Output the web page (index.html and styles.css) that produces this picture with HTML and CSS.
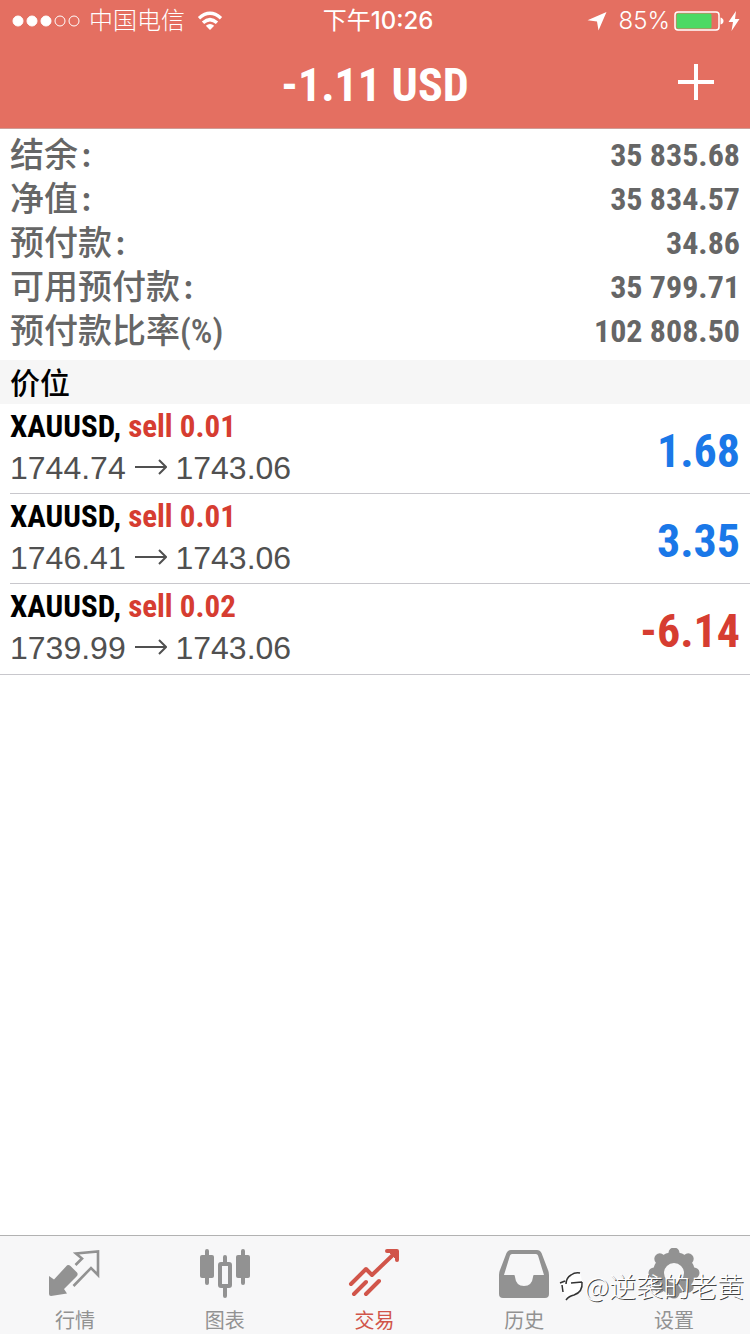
FILE: index.html
```html
<!DOCTYPE html>
<html lang="zh-CN">
<head>
<meta charset="utf-8">
<meta name="viewport" content="width=device-width, initial-scale=1">
<title>交易</title>
<link rel="stylesheet" href="styles.css">
</head>
<body>
<div class="app">
  <header class="header">
    <div class="status">
      <div class="status-side">
        <svg class="signal" width="68" height="12" viewBox="0 0 68 12" fill="#fff" stroke="#fff" aria-hidden="true">
          <circle cx="6" cy="6" r="5"/><circle cx="20" cy="6" r="5"/><circle cx="34" cy="6" r="5"/>
          <circle cx="48" cy="6" r="5" fill="none"/><circle cx="62" cy="6" r="5" fill="none"/>
        </svg>
        <span class="carrier">中国电信</span>
        <svg width="26" height="20" viewBox="0 0 26 20" fill="none" stroke="#fff" stroke-width="3.400" aria-hidden="true">
          <path d="M2 7.200Q13 -2.600 24 7.200"/><path d="M6 11.800Q13 5.400 20 11.800"/><path d="M13 19L8.800 14.800Q13 11.200 17.200 14.800Z" fill="#fff" stroke="none"/>
        </svg>
      </div>
      <time class="clock">下午<span class="clock-digits">10:26</span></time>
      <div class="status-side status-right">
        <svg class="locate" width="20" height="20" viewBox="0 0 20 20" fill="#fff" aria-hidden="true"><path d="M19.500 1L0.500 9.200L10 10.500L11.500 19.500Z"/></svg>
        <span class="percent">85%</span>
        <svg width="50" height="20" viewBox="0 0 50 20" aria-hidden="true">
          <rect x="1" y="1" width="44" height="18" rx="3" fill="none" stroke="#fff" stroke-width="1.500"/>
          <rect x="2.500" y="2.500" width="35" height="15" rx="1.500" fill="#4cd964"/>
          <path d="M46.500 6.500Q49.500 7.500 49.500 10T46.500 13.500Z" fill="#fff"/>
        </svg>
        <svg width="12" height="20" viewBox="0 0 12 20" fill="#fff" aria-hidden="true"><path d="M8 0L0.500 11H5L3.500 20L11.500 8H7Z"/></svg>
      </div>
    </div>
    <div class="nav">
      <h1 class="title">-1.11 USD</h1>
      <button class="add" type="button" aria-label="新订单">
        <svg width="36" height="36" viewBox="0 0 36 36" stroke="#fff" stroke-width="4" aria-hidden="true"><path d="M18 0V36M0 18H36"/></svg>
      </button>
    </div>
  </header>

  <main class="main">
    <dl class="account">
      <div class="account-row"><dt>结余<span class="colon">:</span></dt><dd>35 835.68</dd></div>
      <div class="account-row"><dt>净值<span class="colon">:</span></dt><dd>35 834.57</dd></div>
      <div class="account-row"><dt>预付款<span class="colon">:</span></dt><dd>34.86</dd></div>
      <div class="account-row"><dt>可用预付款<span class="colon">:</span></dt><dd>35 799.71</dd></div>
      <div class="account-row"><dt>预付款比率(%)</dt><dd>102 808.50</dd></div>
    </dl>
    <h2 class="section">价位</h2>
    <ul class="positions">
      <li class="position">
        <div class="details">
          <div class="symbol">XAUUSD, <span class="sell">sell 0.01</span></div>
          <div class="prices">1744.74 <svg class="arrow" viewBox="0 0 32 16" aria-label="→"><path d="M0 8H31M24 1L31 8L24 15"/></svg> 1743.06</div>
        </div>
        <div class="profit">1.68</div>
      </li>
      <li class="position">
        <div class="details">
          <div class="symbol">XAUUSD, <span class="sell">sell 0.01</span></div>
          <div class="prices">1746.41 <svg class="arrow" viewBox="0 0 32 16" aria-label="→"><path d="M0 8H31M24 1L31 8L24 15"/></svg> 1743.06</div>
        </div>
        <div class="profit">3.35</div>
      </li>
      <li class="position">
        <div class="details">
          <div class="symbol">XAUUSD, <span class="sell">sell 0.02</span></div>
          <div class="prices">1739.99 <svg class="arrow" viewBox="0 0 32 16" aria-label="→"><path d="M0 8H31M24 1L31 8L24 15"/></svg> 1743.06</div>
        </div>
        <div class="profit loss">-6.14</div>
      </li>
    </ul>
  </main>

  <nav class="tabs">
    <a class="tab" href="#quotes">
      <svg class="tab-icon" viewBox="0 0 52 52" fill="currentColor" aria-hidden="true">
        <path d="M0 28L5 31.500L17 18.500Q19 16 21.500 18L28 24.500Q29.500 26.500 27.500 28.500L15 41L18 45.500L2 48Q0 48 0 46Z"/>
        <path d="M26.500 17L33 10.500L27 5.500L49 3.500V27L42 20L24.500 38" fill="none" stroke="currentColor" stroke-width="2.600"/>
      </svg>
      <span>行情</span>
    </a>
    <a class="tab" href="#chart">
      <svg class="tab-icon" viewBox="0 0 52 52" fill="currentColor" aria-hidden="true">
        <rect x="1" y="7" width="14" height="23" rx="2"/><rect x="37" y="7" width="14" height="23" rx="2"/>
        <path d="M8 3V35M44 3V35M26 9V16M26 38V48" stroke="currentColor" stroke-width="4" stroke-linecap="round"/>
        <rect x="21" y="16" width="10" height="22" rx="1" fill="none" stroke="currentColor" stroke-width="4"/>
      </svg>
      <span>图表</span>
    </a>
    <a class="tab tab-active" href="#trade" aria-current="page">
      <svg class="tab-icon" viewBox="0 0 52 52" fill="none" stroke="currentColor" stroke-width="4" stroke-linecap="round" stroke-linejoin="round" aria-hidden="true">
        <path d="M3 36L18 21L24 27L48 4M39 3H49V12M6 46L18 34M18 46L31 33"/><path d="M40 3L49 12V3Z" fill="currentColor" stroke-width="1"/>
      </svg>
      <span>交易</span>
    </a>
    <a class="tab" href="#history">
      <svg class="tab-icon" viewBox="0 0 52 52" fill="currentColor" aria-hidden="true">
        <path fill-rule="evenodd" d="M13 2H39Q42 2 43.500 5L50 22Q51 24 51 27V46Q51 50 47 50H5Q1 50 1 46V27Q1 24 2 22L8.500 5Q10 2 13 2ZM14 6Q12.500 6 12 7.500L6 27H16Q17 27 17 29Q18 38 26 38T35 29Q35 27 36 27H46L40 7.500Q39.500 6 38 6Z"/>
      </svg>
      <span>历史</span>
    </a>
    <a class="tab" href="#settings">
      <svg class="tab-icon" viewBox="0 0 52 52" fill="currentColor" aria-hidden="true">
        <path fill-rule="evenodd" d="M26 4A21 21 0 1 0 26 46A21 21 0 1 0 26 4ZM26 15A10 10 0 1 1 26 35A10 10 0 1 1 26 15Z"/>
        <g stroke="currentColor" stroke-width="11" stroke-linecap="round"><path d="M26 5V7M26 43V45M6 25H8M44 25H46M11.800 10.800L13 12M39 38L40.200 39.200M11.800 39.200L13 38M39 12L40.200 10.800"/></g>
      </svg>
      <span>设置</span>
    </a>
    <div class="watermark">
      <svg width="25" height="32" viewBox="0 0 25 32" fill="none" aria-hidden="true">
        <path d="M21 3Q9 0 6 10L1 13L4 23Q8 25 8 30Q12 25 17 24Q25 20 23 11Z" fill="#fff"/>
        <path d="M21 3Q16 2 12 5Q7 8 7 14M1 13L6 11M12 13L23 12M3 15L4 22M23 12Q24 22 15 25Q10 26 7 30" stroke="#333" stroke-width="1.500"/>
      </svg>
      <span>@逆袭的老黄</span>
    </div>
  </nav>
</div>
</body>
</html>
```
FILE: styles.css
```css
* { box-sizing: border-box; }

body {
  margin: 0;
  background: #fff;
  font-family: "Liberation Sans", "Noto Sans CJK SC", sans-serif;
}

.app {
  display: flex;
  flex-direction: column;
  min-height: 100vh;
}

.header {
  background: #e46f61;
  color: #fff;
  border-bottom: 1px solid #cf9c96;
}

.status {
  display: grid;
  grid-template-columns: 1fr auto 1fr;
  align-items: center;
  height: 42px;
  padding: 0 10px 0 12px;
  font-family: Inter, "Noto Sans CJK SC", sans-serif;
  font-size: 24px;
  line-height: 40px;
}

.status-side {
  display: flex;
  align-items: center;
}

.status-right { justify-content: flex-end; gap: 4px; }
.carrier { margin: 0 12px 0 9px; font-weight: 300; }
.clock { padding-left: 4px; }
.clock-digits { font-weight: 500; }
.locate { margin-right: 8px; }
.percent { font-weight: 300; }

.nav {
  display: grid;
  grid-template-columns: 1fr auto 1fr;
  align-items: center;
  height: 86px;
  padding: 0 36px;
}

.title {
  grid-column: 2;
  margin: 0;
  font: bold 46px/60px "Roboto Condensed", Roboto, sans-serif;
}

.add {
  justify-self: end;
  display: flex;
  padding: 0;
  margin-bottom: 6px;
  border: 0;
  background: none;
}

.main { flex: 1; }

.account {
  margin: 0;
  padding: 4px 10px 7px;
  color: #666;
}

.account-row {
  display: flex;
  justify-content: space-between;
  height: 44px;
  line-height: 44px;
}

.account dt {
  font-family: "Roboto Condensed", "Noto Sans CJK SC", sans-serif;
  font-size: 34px;
  font-weight: 500;
}

.account dd {
  margin: 0;
  font: bold 32px/44px "Roboto Condensed", Roboto, sans-serif;
}

.colon {
  margin-left: 3px;
  font-family: Inter, sans-serif;
  font-weight: 600;
}

.section {
  margin: 0;
  padding: 0 10px 2px;
  background: #f6f6f6;
  font: 500 30px/42px "Noto Sans CJK SC", sans-serif;
}

.positions {
  margin: 0;
  padding: 0;
  list-style: none;
  border-bottom: 1px solid #c8c7cc;
}

.position {
  display: flex;
  justify-content: space-between;
  align-items: center;
  height: 90px;
  margin-left: 10px;
  padding-right: 10px;
  border-bottom: 1px solid #c8c7cc;
}

.position:last-child { border-bottom: 0; }

.details { padding-bottom: 2px; }

.symbol {
  font: bold 31px/40px "Roboto Condensed", Roboto, sans-serif;
}

.prices {
  color: #505050;
  font-size: 32px;
  line-height: 42px;
}

.arrow {
  width: 32px;
  height: 16px;
  vertical-align: 4px;
  fill: none;
  stroke: #505050;
  stroke-width: 2;
}

.profit {
  padding-top: 4px;
  color: #1a78e8;
  font: bold 46px/60px "Roboto Condensed", Roboto, sans-serif;
}

.sell, .profit.loss { color: #d63d31; }

.tabs {
  position: relative;
  display: grid;
  grid-template-columns: repeat(5, 1fr);
  height: 99px;
  padding-right: 1px;
  border-top: 1px solid #b2b2b2;
  background: #f7f7f8;
}

.tab {
  display: flex;
  flex-direction: column;
  align-items: center;
  padding-top: 12px;
  color: #929292;
  font: 20px/30px "Noto Sans CJK SC", sans-serif;
  text-decoration: none;
}

.tab-active { color: #d1554a; }

.tab-icon {
  width: 52px;
  height: 52px;
  margin-bottom: 5px;
}

.watermark {
  position: absolute;
  right: 6px;
  top: 30px;
  display: flex;
  align-items: center;
  color: #fff;
  font: 300 27px/40px "Noto Sans CJK SC", sans-serif;
  text-shadow: 1px 1px 0 #444;
}
```
